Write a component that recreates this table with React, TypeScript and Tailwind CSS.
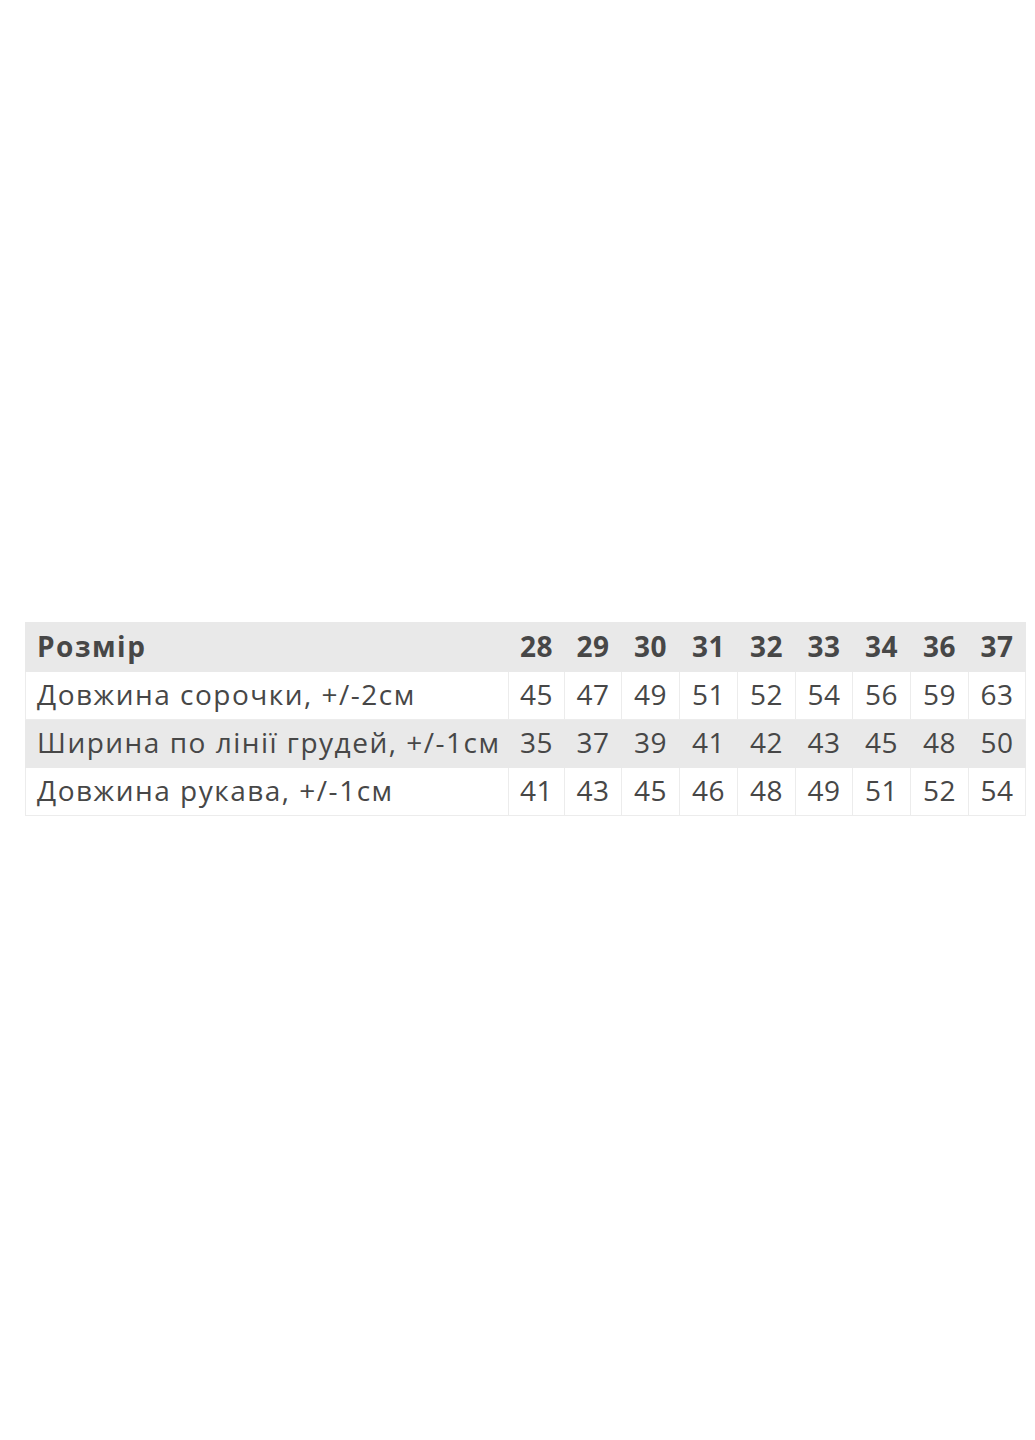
const sizes = ["28", "29", "30", "31", "32", "33", "34", "36", "37"];

const rows = [
  { label: "Довжина сорочки, +/-2см", values: ["45", "47", "49", "51", "52", "54", "56", "59", "63"], shaded: false },
  { label: "Ширина по лінії грудей, +/-1см", values: ["35", "37", "39", "41", "42", "43", "45", "48", "50"], shaded: true },
  { label: "Довжина рукава, +/-1см", values: ["41", "43", "45", "46", "48", "49", "51", "52", "54"], shaded: false },
];

const colW = ["w-[56px]", "w-[57px]", "w-[58px]", "w-[58px]", "w-[58px]", "w-[57px]", "w-[58px]", "w-[58px]", "w-[57px]"];

export default function App() {
  return (
    <div className="w-[1035px] h-[1440px] bg-white pt-[622px] pl-[25px] font-['Open_Sans',sans-serif] text-[#474747]">
      <table className="border-collapse table-fixed w-[1000px]">
        <colgroup>
          <col className="w-[483px]" />
          {colW.map((w, i) => (
            <col key={i} className={w} />
          ))}
        </colgroup>
        <thead>
          <tr className="bg-[#e9e9e9] h-[49px]">
            <th className="text-left font-bold text-[28px] pl-[11px] pb-[3px] border border-[#e9e9e9] tracking-[1.5px]">Розмір</th>
            {sizes.map((s) => (
              <th key={s} className="text-center font-bold text-[28px] pb-[3px] tracking-[0.5px] border border-[#e9e9e9]">
                {s}
              </th>
            ))}
          </tr>
        </thead>
        <tbody>
          {rows.map((r) => (
            <tr key={r.label} className={`h-[48px] ${r.shaded ? "bg-[#e9e9e9]" : "bg-white"}`}>
              <td className={`text-left text-[28px] pl-[11px] pb-[3px] whitespace-nowrap tracking-[1.5px] border ${r.shaded ? "border-[#e9e9e9]" : "border-[#ececec]"}`}>
                {r.label}
              </td>
              {r.values.map((v, i) => (
                <td key={i} className={`text-center text-[28px] pb-[3px] tracking-[0.5px] border ${r.shaded ? "border-[#e9e9e9]" : "border-[#ececec]"}`}>
                  {v}
                </td>
              ))}
            </tr>
          ))}
        </tbody>
      </table>
    </div>
  );
}
